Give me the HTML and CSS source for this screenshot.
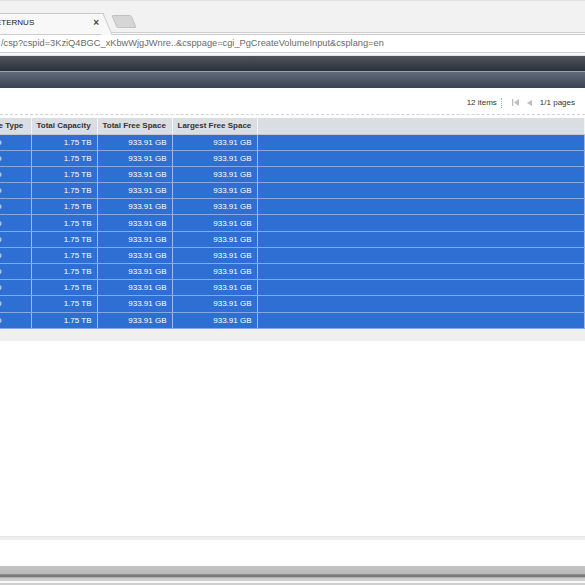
FILE: index.html
```html
<!DOCTYPE html>
<html>
<head>
<meta charset="utf-8">
<link rel="stylesheet" href="styles.css">
</head>
<body>
<div class="page">
  <div class="tabstrip">
    <div class="tab">
      <span class="tab-title">ETERNUS</span>
      <span class="tab-close">×</span>
    </div>
    <div class="newtab"></div>
  </div>
  <div class="toolbar">
    <div class="omnibox">/csp?cspid=3KziQ4BGC_xKbwWjgJWnre..&amp;csppage=cgi_PgCreateVolumeInput&amp;csplang=en</div>
  </div>
  <div class="bar-top"></div>
  <div class="bar-sep"></div>
  <div class="bar-sub"></div>
  <div class="pager">
    <span class="items">12 items</span>
    <span class="sep"></span>
    <svg class="ico first" width="7" height="7" viewBox="0 0 7 7"><rect x="0" y="0" width="1.3" height="7" fill="#bdbdbd"/><path d="M7 0 L2 3.5 L7 7 Z" fill="#bdbdbd"/></svg>
    <svg class="ico prev" width="5" height="6" viewBox="0 0 5 6"><path d="M5 0 L0 3 L5 6 Z" fill="#bdbdbd"/></svg>
    <span class="pages">1/1 pages</span>
  </div>
  <div class="grid-wrap">
    <table class="grid">
      <colgroup>
        <col class="c1"><col class="c2"><col class="c3"><col class="c4"><col>
      </colgroup>
      <thead>
        <tr><th>Drive Type</th><th>Total Capacity</th><th>Total Free Space</th><th>Largest Free Space</th><th></th></tr>
      </thead>
      <tbody>
        <tr><td class="l">SSD</td><td>1.75 TB</td><td>933.91 GB</td><td>933.91 GB</td><td></td></tr>
        <tr><td class="l">SSD</td><td>1.75 TB</td><td>933.91 GB</td><td>933.91 GB</td><td></td></tr>
        <tr><td class="l">SSD</td><td>1.75 TB</td><td>933.91 GB</td><td>933.91 GB</td><td></td></tr>
        <tr><td class="l">SSD</td><td>1.75 TB</td><td>933.91 GB</td><td>933.91 GB</td><td></td></tr>
        <tr><td class="l">SSD</td><td>1.75 TB</td><td>933.91 GB</td><td>933.91 GB</td><td></td></tr>
        <tr><td class="l">SSD</td><td>1.75 TB</td><td>933.91 GB</td><td>933.91 GB</td><td></td></tr>
        <tr><td class="l">SSD</td><td>1.75 TB</td><td>933.91 GB</td><td>933.91 GB</td><td></td></tr>
        <tr><td class="l">SSD</td><td>1.75 TB</td><td>933.91 GB</td><td>933.91 GB</td><td></td></tr>
        <tr><td class="l">SSD</td><td>1.75 TB</td><td>933.91 GB</td><td>933.91 GB</td><td></td></tr>
        <tr><td class="l">SSD</td><td>1.75 TB</td><td>933.91 GB</td><td>933.91 GB</td><td></td></tr>
        <tr><td class="l">SSD</td><td>1.75 TB</td><td>933.91 GB</td><td>933.91 GB</td><td></td></tr>
        <tr><td class="l">SSD</td><td>1.75 TB</td><td>933.91 GB</td><td>933.91 GB</td><td></td></tr>
      </tbody>
    </table>
  </div>
  <div class="grid-foot"></div>
  <div class="blank"></div>
  <div class="divider"></div>
  <div class="blank2"></div>
  <div class="bottombar"></div>
</div>
</body>
</html>
```

FILE: styles.css
```css
html, body {
  margin: 0;
  padding: 0;
  background: #fff;
}
.page {
  width: 585px;
  height: 585px;
  overflow: hidden;
  display: flex;
  flex-direction: column;
  font-family: "Liberation Sans", Arial, sans-serif;
}
.tabstrip {
  height: 33px;
  flex: none;
  background: #f2f2f2;
  border-top: 1px solid #e2e2e2;
  box-sizing: border-box;
  border-bottom: 1px solid #cfcfcf;
  display: flex;
  align-items: flex-end;
}
.tab {
  position: relative;
  width: 104px;
  height: 20px;
  margin-bottom: -1px;
  background: #f8f8f8;
  border-top: 1px solid #c8c8c8;
  display: flex;
  align-items: center;
  justify-content: space-between;
  box-sizing: border-box;
  padding: 0 5px 2px 0;
  z-index: 1;
}
.tab::after {
  content: "";
  position: absolute;
  right: -4px;
  top: -1px;
  width: 10px;
  height: 21px;
  background: #f8f8f8;
  border-top: 1px solid #c8c8c8;
  border-right: 1px solid #c8c8c8;
  transform: skewX(23deg);
  z-index: -1;
}
.tab-title {
  font-size: 8px;
  color: #222;
  margin-left: -4px;
}
.tab-close {
  font-size: 10px;
  color: #444;
  font-weight: bold;
}
.newtab {
  width: 18px;
  height: 11px;
  margin-bottom: 4px;
  margin-left: 10px;
  background: #d6d6d6;
  border: 1px solid #c2c2c2;
  border-radius: 2px;
  transform: skewX(22deg);
}
.toolbar {
  height: 22px;
  flex: none;
  background: #f8f8f8;
  padding-top: 1px;
  box-sizing: border-box;
}
.omnibox {
  height: 19px;
  box-sizing: border-box;
  background: #fff;
  border-top: 1px solid #cdcdcd;
  border-bottom: 1px solid #cdcdcd;
  font-size: 9.25px;
  line-height: 17px;
  color: #6a6a6a;
  padding-left: 1px;
  white-space: nowrap;
}
.bar-top {
  height: 15px;
  flex: none;
  background: linear-gradient(#50545d, #2c3038);
  border-top: 1px solid #e6e6e6;
}
.bar-sep {
  height: 1px;
  flex: none;
  background: #9aa3b2;
}
.bar-sub {
  height: 16px;
  flex: none;
  background: linear-gradient(#616b7b, #3b4351);
}
.pager {
  height: 27px;
  flex: none;
  box-sizing: border-box;
  border-bottom: 1px dashed #d5d5d5;
  margin-bottom: 3px;
  display: flex;
  align-items: center;
  justify-content: flex-end;
  padding: 3px 10px 0 0;
  font-size: 8px;
  color: #333;
}
.items {
  margin-right: 4px;
}
.sep {
  width: 1px;
  height: 10px;
  border-left: 1px dotted #b5b5b5;
  margin-right: 9px;
}
.ico.first {
  margin-right: 8px;
}
.ico.prev {
  margin-right: 8px;
}
.grid-wrap {
  flex: none;
  margin-left: -22px;
}
.grid {
  border-collapse: collapse;
  table-layout: fixed;
  width: 607px;
  font-size: 8px;
}
.c1 { width: 53px; }
.c2 { width: 66px; }
.c3 { width: 75px; }
.c4 { width: 85px; }
.grid th {
  height: 16px;
  box-sizing: border-box;
  padding: 0 5px;
  background: #dadde2;
  color: #333;
  font-weight: bold;
  text-align: left;
  border-right: 1px solid #f4f5f7;
  border-bottom: 1px solid #c4c8cf;
  white-space: nowrap;
  overflow: hidden;
}
.grid td {
  height: 16.2px;
  box-sizing: border-box;
  padding: 0 5px;
  background: #2d6fd2;
  color: #fff;
  text-align: right;
  border-right: 1px solid #9bbbec;
  border-bottom: 1px solid #86a9e6;
  white-space: nowrap;
  overflow: hidden;
}
.grid td.l {
  text-align: left;
  padding-left: 7px;
}
.grid-foot {
  height: 12px;
  flex: none;
  background: #efefef;
}
.blank {
  flex: 1;
  background: #fff;
}
.divider {
  height: 3px;
  flex: none;
  background: #efefef;
  border-top: 1px solid #e6e6e6;
}
.blank2 {
  height: 26px;
  flex: none;
  background: #fff;
}
.bottombar {
  height: 19px;
  flex: none;
  background: linear-gradient(#c4c4c4 0, #bababa 40%, #7a7a7a 47%, #7a7a7a 57%, #c8c8c8 62%, #d2d2d2 78%, #fafafa 82%, #fafafa 88%, #cfcfcf 90%, #cfcfcf 100%);
}
```
